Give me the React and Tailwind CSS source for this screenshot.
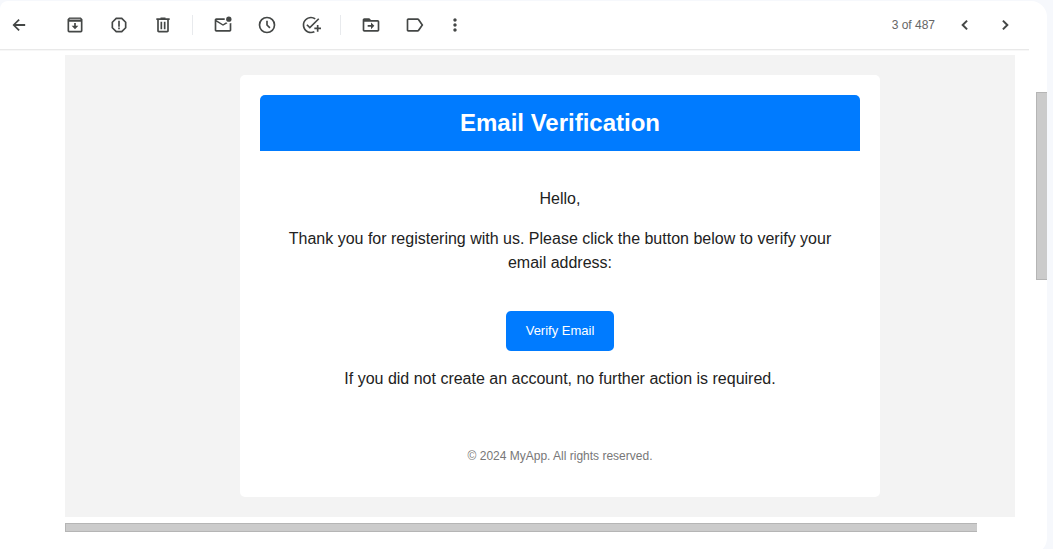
import { MdMoreVert } from 'react-icons/md';

const Icon = ({ children }) => (
  <svg viewBox="0 0 24 24" className="size-5" fill="currentColor" fillRule="evenodd" aria-hidden="true">
    {children}
  </svg>
);

const ToolButton = ({ label, children }) => (
  <button type="button" aria-label={label} className="size-5 shrink-0 cursor-pointer text-[#444746]">
    {children}
  </button>
);

const Separator = () => <div className="ml-[19px] mr-5 h-5 w-px shrink-0 bg-[#e8eaed]" />;

function Toolbar() {
  return (
    <header className="mr-[18px] flex h-[49px] items-center border-b border-[#e9e9e9] pl-[9px] pr-[14px] shadow-[0_1px_0_#f7f7f7]">
      <ToolButton label="Back">
        <Icon>
          <path d="M19.4 10.9H8.2l4.7-4.7L11.4 4.700 4.200 12l7.200 7.300 1.500-1.500-4.700-4.700h11.200z" />
        </Icon>
      </ToolButton>

      <div className="ml-9 flex items-center gap-6">
        <ToolButton label="Archive">
          <Icon>
            <path d="M5 3h14l2 2v14a2 2 0 0 1-2 2H5a2 2 0 0 1-2-2V5zM5 8v11h14V8z" />
            <path d="M5.5 4.5h13V6h-13z" fill="#aaa" />
            <path d="M11 9.5h2V13h3l-4 4-4-4h3z" />
          </Icon>
        </ToolButton>
        <ToolButton label="Report spam">
          <Icon>
            <path d="M15.730 3H8.270L3 8.270v7.460L8.270 21h7.460L21 15.730V8.270L15.730 3zM19 14.900L14.900 19H9.100L5 14.900V9.100L9.100 5h5.800L19 9.100v5.800z" />
            <path d="M11 7h2v7h-2zM11 15h2v2h-2z" />
          </Icon>
        </ToolButton>
        <ToolButton label="Delete">
          <Icon>
            <path d="M15 4V3H9v1H4v2h1v13c0 1.100.9 2 2 2h10c1.100 0 2-.9 2-2V6h1V4h-5zm2 15H7V6h10v13z" />
            <path d="M9 8h2v9H9zM13 8h2v9h-2z" />
          </Icon>
        </ToolButton>
      </div>

      <Separator />

      <div className="flex items-center gap-6">
        <ToolButton label="Mark as unread">
          <Icon>
            <path d="M22 9.500V18c0 1.100-.9 2-2 2H4c-1.100 0-2-.9-2-2V6c0-1.100.9-2 2-2h10.100a5 5 0 0 0 0 2H4l8 5 3.700-2.300a5 5 0 0 0 1.700 1.300L12 13 4 8v10h16V9.900a5 5 0 0 0 2-.4z" />
            <circle cx="19" cy="5" r="3.2" />
          </Icon>
        </ToolButton>
        <ToolButton label="Snooze">
          <Icon>
            <path d="M12 2a10 10 0 1 0 0 20 10 10 0 0 0 0-20zm0 18a8 8 0 1 1 0-16 8 8 0 0 1 0 16z" />
            <path d="M13 7h-2v5.400l3.800 3.800 1.400-1.400-3.200-3.200z" />
          </Icon>
        </ToolButton>
        <ToolButton label="Add to tasks">
          <Icon>
            <path d="M22 5.180L10.590 16.600l-4.240-4.240 1.410-1.410 2.830 2.830 10-10L22 5.180zM12 20c-4.410 0-8-3.590-8-8s3.590-8 8-8c1.570 0 3.040.46 4.280 1.250l1.450-1.450A10.020 10.020 0 0 0 12 2C6.480 2 2 6.480 2 12s4.480 10 10 10c1.730 0 3.360-.44 4.780-1.220l-1.500-1.500c-1 .46-2.110.72-3.280.72zm7-5h-3v2h3v3h2v-3h3v-2h-3v-3h-2v3z" />
          </Icon>
        </ToolButton>
      </div>

      <Separator />

      <div className="flex items-center gap-6">
        <ToolButton label="Move to">
          <Icon>
            <path d="M20 6h-8l-2-2H4c-1.100 0-2 .9-2 2v12c0 1.100.9 2 2 2h16c1.100 0 2-.9 2-2V8c0-1.100-.9-2-2-2zm0 12H4V8h16v10z" />
            <path d="M3 5h7l2 2H3z" />
            <path d="M12 9l4 4-4 4v-3H8v-2h4z" />
          </Icon>
        </ToolButton>
        <ToolButton label="Labels">
          <Icon>
            <path d="M17.030 4.880C16.600 4.340 16 4 15.270 4H4c-1.100 0-2 .9-2 2v12c0 1.100.9 2 2 2h11.270c.73 0 1.330-.34 1.760-.88L22 12l-4.970-7.120zM15.270 18H4V6h11.270l4.290 6-4.290 6z" />
          </Icon>
        </ToolButton>
      </div>

      <div className="ml-5 flex">
        <ToolButton label="More">
          <MdMoreVert className="size-5" />
        </ToolButton>
      </div>

      <div className="ml-auto flex items-center gap-5">
        <span className="text-xs leading-5 text-[#666]">3 of 487</span>
        <ToolButton label="Newer">
          <Icon>
            <path d="M14.500 6.700 9.200 12l5.300 5.300" fill="none" stroke="currentColor" strokeWidth="2.400" />
          </Icon>
        </ToolButton>
        <ToolButton label="Older">
          <Icon>
            <path d="M9.500 6.700 14.800 12l-5.300 5.300" fill="none" stroke="currentColor" strokeWidth="2.400" />
          </Icon>
        </ToolButton>
      </div>
    </header>
  );
}

function VerificationEmail() {
  return (
    <article className="mx-auto w-full max-w-[640px] rounded-[5px] bg-white p-5 text-center text-[#222]">
      <h1 className="rounded-t-[5px] bg-[#007bff] p-2.5 text-2xl leading-9 font-bold text-white">
        Email Verification
      </h1>
      <div className="px-5 pt-9 text-base leading-6">
        <p>Hello,</p>
        <p className="mt-4">
          Thank you for registering with us. Please click the button below to verify your email address:
        </p>
        <button
          type="button"
          className="mt-9 h-10 cursor-pointer rounded-[5px] bg-[#007bff] px-5 text-[13px] text-white"
        >
          Verify Email
        </button>
        <p className="mt-4">If you did not create an account, no further action is required.</p>
      </div>
      <footer className="mt-14 pb-3 text-xs leading-[18px] text-[#777]">
        © 2024 MyApp. All rights reserved.
      </footer>
    </article>
  );
}

export default function App() {
  return (
    <div className="h-screen overflow-hidden bg-[#f6f8fc] pt-px pr-1.5 font-['Liberation_Sans',Arial,sans-serif]">
      <div className="rounded-tl-lg rounded-r-2xl bg-white pb-[22px]">
        <Toolbar />
        <div className="flex items-start pl-[65px]">
          <main className="mt-[5px] min-w-0 flex-1">
            <div className="overflow-hidden bg-[#f3f3f3]">
              <div className="w-[calc(100%+40px)] py-5">
                <VerificationEmail />
              </div>
            </div>
            <div className="mt-1.5 h-[9px] w-[96%] border-y border-l border-[#b5b5b5] bg-[#cbcbcb]" />
          </main>
          <div className="mt-[42px] ml-[21px] h-[188px] w-[11px] shrink-0 border-y border-l border-[#b5b5b5] bg-[#cbcbcb]" />
        </div>
      </div>
    </div>
  );
}
